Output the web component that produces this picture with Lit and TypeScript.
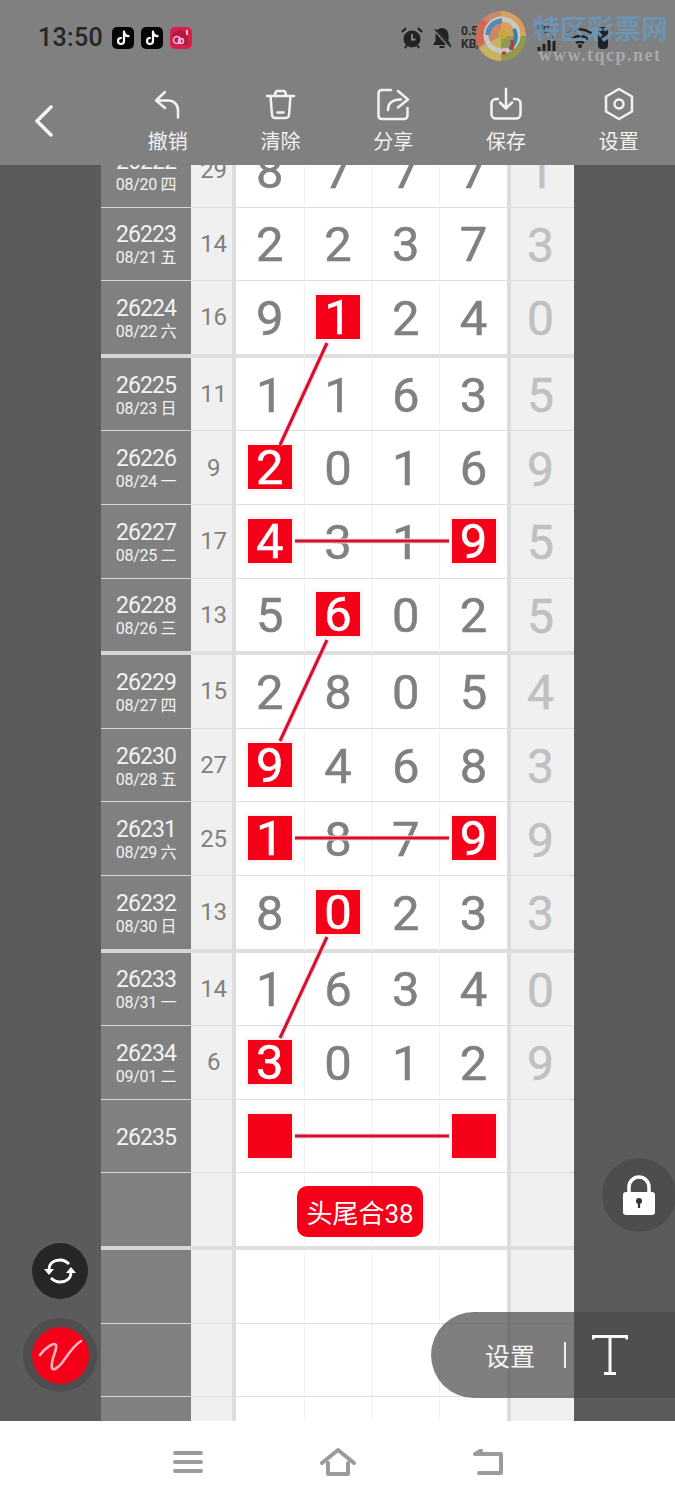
import { LitElement, html, css, svg } from 'lit';
import { customElement } from 'lit/decorators.js';

type Digit = number | string;
interface Row {
  issue?: string;
  date?: string;
  sum?: number;
  digits?: Digit[];
  hits?: number[];
  last?: number;
  end?: boolean;
  badge?: string;
}

const ROWS: Row[] = [
  { issue: '26222', date: '08/20 四', sum: 29, digits: [8, 7, 7, 7], last: 1 },
  { issue: '26223', date: '08/21 五', sum: 14, digits: [2, 2, 3, 7], last: 3 },
  { issue: '26224', date: '08/22 六', sum: 16, digits: [9, 1, 2, 4], hits: [1], last: 0, end: true },
  { issue: '26225', date: '08/23 日', sum: 11, digits: [1, 1, 6, 3], last: 5 },
  { issue: '26226', date: '08/24 一', sum: 9, digits: [2, 0, 1, 6], hits: [0], last: 9 },
  { issue: '26227', date: '08/25 二', sum: 17, digits: [4, 3, 1, 9], hits: [0, 3], last: 5 },
  { issue: '26228', date: '08/26 三', sum: 13, digits: [5, 6, 0, 2], hits: [1], last: 5, end: true },
  { issue: '26229', date: '08/27 四', sum: 15, digits: [2, 8, 0, 5], last: 4 },
  { issue: '26230', date: '08/28 五', sum: 27, digits: [9, 4, 6, 8], hits: [0], last: 3 },
  { issue: '26231', date: '08/29 六', sum: 25, digits: [1, 8, 7, 9], hits: [0, 3], last: 9 },
  { issue: '26232', date: '08/30 日', sum: 13, digits: [8, 0, 2, 3], hits: [1], last: 3, end: true },
  { issue: '26233', date: '08/31 一', sum: 14, digits: [1, 6, 3, 4], last: 0 },
  { issue: '26234', date: '09/01 二', sum: 6, digits: [3, 0, 1, 2], hits: [0], last: 9 },
  { issue: '26235', digits: ['', '', '', ''], hits: [0, 3] },
  { badge: '头尾合38', end: true },
  {},
  {},
  {},
];

// link lines between the marked cells, in page coordinates minus the 165px header
const LINKS = [
  [327, 178, 280, 280],
  [295, 376, 449, 376],
  [327, 475, 280, 576],
  [295, 673, 449, 673],
  [327, 772, 280, 873],
  [295, 971, 449, 971],
];

const TOOLS = [
  {
    label: '撤销',
    icon: svg`<path d="M14 5 5 13.5l9 7.5M5.5 13.5H17c6 0 10 4 10 10v7"/>`,
  },
  {
    label: '清除',
    icon: svg`<path d="M3 9h27M11 9c0-2 .5-4.5 2-5h7c1.500 .5 2 3 2 5M6.500 9l1.500 19c.2 2 1.500 3 3 3h11c1.500 0 2.800-1 3-3l1.500-19M13.500 25.500h6"/>`,
  },
  {
    label: '分享',
    icon: svg`<path d="M15 3H6C3.800 3 2.500 4.500 2.500 6.500v22C2.500 30.500 3.800 32 6 32h22c2 0 3.500-1.500 3.500-3.500V21"/><path d="M13 23c0-7 4-10.500 13-10.500M23 4l10 8.500-10 8" transform="translate(-1 0)"/>`,
  },
  {
    label: '保存',
    icon: svg`<path d="M9 12H7c-2.500 0-4.500 2-4.500 4.500V27c0 2.800 2 4.500 4.500 4.500h20c2.500 0 4.500-1.700 4.500-4.500V16.500C31.500 14 29.500 12 27 12h-2M17 2v19M11 15.500l6 6 6-6"/>`,
  },
  {
    label: '设置',
    icon: svg`<path d="M17 2 30 9.500v15L17 32 4 24.500v-15Z"/><circle cx="17" cy="17" r="4.500"/>`,
  },
];

@customElement('app-root')
export class AppRoot extends LitElement {
  static styles = css`
    :host {
      display: block;
      width: 675px;
      height: 1500px;
      overflow: hidden;
      font-family: Roboto, 'Noto Sans CJK SC', sans-serif;
      background: #fff;
    }

    .top {
      height: 165px;
      background: #808080;
      position: relative;
    }

    .status {
      height: 75px;
      display: flex;
      align-items: center;
      padding-left: 38px;
      box-sizing: border-box;
    }

    .time {
      font-size: 25px;
      font-weight: 500;
      color: #262626;
      width: 74px;
      letter-spacing: 0.3px;
    }

    .apps {
      display: flex;
      gap: 7px;
    }

    .app {
      width: 22px;
      height: 22px;
      display: block;
    }

    .sys {
      margin-left: auto;
      display: flex;
      align-items: center;
      padding-right: 67px;
      height: 30px;
    }

    .speed {
      font-size: 12px;
      line-height: 13px;
      font-weight: 700;
      color: #2a2a2a;
      width: 38px;
      margin: 0 0 0 7px;
    }

    .bars {
      width: 20px;
      margin-left: 38px;
      display: flex;
      flex-direction: column;
      font-size: 10px;
      line-height: 10px;
      font-weight: 700;
      color: #2a2a2a;
    }

    .bars svg {
      display: block;
      margin-top: 1px;
    }

    .wifi {
      margin-left: 10px;
    }

    .battery {
      width: 10px;
      height: 22px;
      background: #1e2226;
      border-radius: 4px;
      margin-left: 5px;
    }

    .logo {
      position: absolute;
      left: 476px;
      top: 11px;
      width: 50px;
      height: 50px;
    }

    .mark {
      position: absolute;
      left: 533px;
      top: 15px;
      width: 134px;
      text-align: center;
    }

    .mark b {
      display: block;
      font-size: 27px;
      line-height: 30px;
      font-weight: 700;
      color: #6a98b9;
      opacity: 0.9;
      white-space: nowrap;
    }

    .mark i {
      display: block;
      font: 700 18px/20px 'Liberation Serif', serif;
      color: #a9a9a9;
      letter-spacing: 1.500px;
      white-space: nowrap;
    }

    .tools {
      display: flex;
      height: 90px;
    }

    .back {
      width: 111.500px;
      display: flex;
      padding: 30px 0 0 34px;
      box-sizing: border-box;
    }

    .tool {
      flex: 1;
      display: flex;
      flex-direction: column;
      align-items: center;
      color: #f2f2f2;
      padding-top: 12px;
      box-sizing: border-box;
      font-size: 20px;
      line-height: 28px;
    }

    .tool svg,
    .back svg,
    .nav svg {
      display: block;
      fill: none;
      stroke: currentColor;
      stroke-linecap: round;
      stroke-linejoin: round;
    }

    .tool svg {
      stroke-width: 2.500;
      margin-bottom: 7px;
    }

    .back svg {
      color: #f6f6f6;
      stroke-width: 3.500;
    }

    .main {
      height: 1256px;
      background: #5b5b5b;
      overflow: hidden;
      position: relative;
    }

    .table {
      margin: -31px 0 0 101px;
      width: 473px;
    }

    .row {
      display: grid;
      grid-template-columns: 90px 45px repeat(4, 67.750px) 67px;
      height: 73.600px;
      position: relative;
    }

    .row.end {
      height: 76.600px;
    }

    .cell {
      box-sizing: border-box;
      display: flex;
      flex-direction: column;
      align-items: center;
      justify-content: center;
      border-bottom: 1px solid #dedede;
    }

    .end .cell {
      border-bottom-width: 4px;
    }

    .id {
      background: #808080;
      color: #f2f2f2;
      border-bottom-color: #d6d6d6;
      padding-top: 2px;
    }

    .id b {
      font-size: 23px;
      line-height: 27px;
      font-weight: 400;
      letter-spacing: -0.900px;
    }

    .id span {
      font-size: 16px;
      line-height: 20px;
      letter-spacing: -0.300px;
    }

    .sum {
      background: #f0f0f0;
      color: #808080;
      font-size: 24px;
      letter-spacing: -0.300px;
      border-right: 4px solid #dcdcdc;
      padding-left: 4px;
    }

    .num {
      background: #fff;
      color: #808080;
      font-size: 49px;
      -webkit-text-stroke: 0.500px currentColor;
      border-left: 1px solid #f1f1f1;
    }

    .num:nth-child(3) {
      border-left: none;
    }

    .num span {
      line-height: 44px;
      padding-top: 3px;
    }

    .num .hit {
      width: 44px;
      height: 44px;
      padding-top: 2px;
      margin-top: -1px;
      box-sizing: border-box;
      display: flex;
      align-items: center;
      justify-content: center;
      background: #f50019;
      color: #fff;
      box-shadow: 0 0 0 3px #fdf4f4;
    }

    .rest {
      background: #f0f0f0;
      color: #c0c0c0;
      font-size: 48px;
      -webkit-text-stroke: 0.500px currentColor;
      border-left: 4px solid #dcdcdc;
      padding-top: 3px;
      padding-right: 4px;
    }

    .badge {
      position: absolute;
      left: 196px;
      top: 13px;
      width: 126px;
      height: 51px;
      border-radius: 10px;
      background: #f50019;
      color: #fff;
      font-size: 26px;
      display: flex;
      align-items: center;
      justify-content: center;
    }

    .links {
      position: absolute;
      left: 0;
      top: 0;
    }

    .links .halo {
      stroke: #fbd6da;
      stroke-width: 5;
    }

    .links .ink {
      stroke: #d4102f;
      stroke-width: 3;
    }

    .round {
      position: absolute;
      border-radius: 50%;
      display: flex;
      align-items: center;
      justify-content: center;
    }

    .sync {
      left: 32px;
      top: 1078px;
      width: 56px;
      height: 56px;
      background: #262626;
    }

    .pen {
      left: 23px;
      top: 1153px;
      width: 74px;
      height: 74px;
      background: #4e4e4e;
    }

    .pen div {
      width: 57px;
      height: 57px;
      border-radius: 50%;
      background: #f50019;
      display: flex;
      align-items: center;
      justify-content: center;
    }

    .lock {
      left: 602px;
      top: 993px;
      width: 74px;
      height: 74px;
      background: #4d4d4d;
    }

    .pill {
      position: absolute;
      left: 431px;
      top: 1147px;
      width: 244px;
      height: 86px;
      border-radius: 43px 0 0 43px;
      background: rgba(75, 75, 75, 0.71);
      display: flex;
      align-items: center;
      box-sizing: border-box;
      padding-left: 54px;
      color: #f4f4f4;
      font-size: 25px;
    }

    .pill i {
      width: 2px;
      height: 26px;
      background: #eee;
      margin: 0 26px 0 29px;
    }

    .nav {
      height: 79px;
      background: #fff;
      color: #9b9b9b;
      display: flex;
      justify-content: center;
      align-items: center;
      gap: 117px;
      padding-top: 2px;
      box-sizing: border-box;
    }

    .nav svg {
      stroke-width: 4;
    }
  `;

  private renderRow(r: Row) {
    const hits = r.hits ?? [];
    const digits = r.digits ?? ['', '', '', ''];
    return html`
      <div class="row ${r.end ? 'end' : ''}">
        <div class="cell id">
          ${r.issue ? html`<b>${r.issue}</b>` : ''}
          ${r.date ? html`<span>${r.date}</span>` : ''}
        </div>
        <div class="cell sum">${r.sum ?? ''}</div>
        ${digits.map(
          (d, i) => html`
            <div class="cell num">
              <span class=${hits.includes(i) ? 'hit' : ''}>${d}</span>
            </div>
          `,
        )}
        <div class="cell rest">${r.last ?? ''}</div>
        ${r.badge ? html`<div class="badge">${r.badge}</div>` : ''}
      </div>
    `;
  }

  private renderStatus() {
    return html`
      <div class="status">
        <div class="time">13:50</div>
        <div class="apps">
          ${[0, 1].map(
            () => html`
              <svg class="app" viewBox="0 0 22 22">
                <rect width="22" height="22" rx="5" fill="#050505" />
                <path d="M12 4.500v9.500a3 3 0 1 1-3-3M12 5c.3 2.500 2 4 4.500 4.200" fill="none" stroke="#fff" stroke-width="2.200" stroke-linecap="round" />
              </svg>
            `,
          )}
          <svg class="app" viewBox="0 0 22 22">
            <rect width="22" height="22" rx="5" fill="#d81f4b" />
            <path d="M2 8c3-5 9-6 13-3l3 5v8H4Z" fill="#b5173f" />
            <circle cx="7" cy="13" r="3.500" fill="none" stroke="#fbe" stroke-width="1.500" />
            <circle cx="11" cy="14" r="2.500" fill="none" stroke="#fbe" stroke-width="1.500" />
            <path d="M17 3v5" stroke="#fff" stroke-width="1.500" />
          </svg>
        </div>
        <div class="sys">
          <svg width="24" height="24" viewBox="0 0 24 24">
            <circle cx="12" cy="13" r="8.500" fill="#222" />
            <path d="M12 8v5.500h3.500" fill="none" stroke="#888" stroke-width="1.800" />
            <path d="M2 6l4-4M22 6l-4-4M5 22l2-3M19 22l-2-3" stroke="#222" stroke-width="2.200" />
          </svg>
          <svg style="margin-left:6px" width="24" height="24" viewBox="0 0 24 24">
            <path d="M12 2c5 0 6.500 4 6.500 8v5l2.500 4H3l2.500-4v-5C5.500 6 7 2 12 2Z" fill="#222" />
            <path d="M9.500 21h5" stroke="#222" stroke-width="2" />
            <path d="M3 2l18 20" stroke="#808080" stroke-width="3" />
            <path d="M5 3l16 18" stroke="#222" stroke-width="1.500" />
          </svg>
          <div class="speed">0.51<br />KB/s</div>
          <div class="bars">
            5G
            <svg width="20" height="15" viewBox="0 0 20 15">
              <path d="M2 15v-4M7 15V8M12 15V4M17 15V0" stroke="#222" stroke-width="3" />
            </svg>
          </div>
          <svg class="wifi" width="26" height="22" viewBox="0 0 26 20">
            <path d="M1 6c7-6 17-6 24 0M5 11c5-4 11-4 16 0M9 15c3-2 5-2 8 0" fill="none" stroke="#222" stroke-width="2.500" />
            <circle cx="13" cy="18" r="2" fill="#222" />
          </svg>
          <div class="battery"></div>
        </div>
        <svg class="logo" viewBox="0 0 50 50">
          <circle cx="25" cy="25" r="25" fill="#c9886a" />
          <path d="M25 0a25 25 0 0 1 25 25H25Z" fill="#d6a15e" />
          <path d="M50 25a25 25 0 0 1-25 25V25Z" fill="#8f9a4f" />
          <path d="M25 50A25 25 0 0 1 3 37l22-12Z" fill="#c7b25d" />
          <path d="M6 8a25 25 0 0 0-4 28l10-6c-3-7-2-13 2-17Z" fill="#d16a55" />
          <circle cx="26" cy="24" r="16" fill="none" stroke="#c8c8c8" stroke-width="5" />
          <path d="M12 24c0-8 6-14 14-14" fill="none" stroke="#4f8bb5" stroke-width="5" />
          <path d="M38 18c4 8 1 16-5 20" fill="none" stroke="#3c7fa6" stroke-width="4" />
          <path d="M30 42h-4M36 29v10" stroke="#c4362f" stroke-width="3" />
          <circle cx="27" cy="23" r="5" fill="#c6a93e" />
        </svg>
        <div class="mark"><b>特区彩票网</b><i>www.tqcp.net</i></div>
      </div>
    `;
  }

  render() {
    return html`
      <div class="top">
        ${this.renderStatus()}
        <div class="tools">
          <div class="back">
            <svg width="20" height="32" viewBox="0 0 20 32"><path d="M17 2 3 16l14 14" /></svg>
          </div>
          ${TOOLS.map(
            (t) => html`
              <div class="tool">
                <svg width="34" height="34" viewBox="0 0 34 34">${t.icon}</svg>
                <span>${t.label}</span>
              </div>
            `,
          )}
        </div>
      </div>

      <div class="main">
        <div class="table">${ROWS.map((r) => this.renderRow(r))}</div>

        <svg class="links" width="675" height="1256">
          ${LINKS.map(
            ([x1, y1, x2, y2]) => svg`
              <line class="halo" x1=${x1} y1=${y1} x2=${x2} y2=${y2} />
              <line class="ink" x1=${x1} y1=${y1} x2=${x2} y2=${y2} />
            `,
          )}
        </svg>

        <div class="round sync">
          <svg width="32" height="30" viewBox="0 0 32 30" fill="none" stroke="#fff" stroke-width="2.800">
            <path d="M5 14C5 7 10 4 16 4c4 0 7 2 9 4" />
            <path d="M27 16c0 7-5 10-11 10-4 0-7-2-9-4" />
            <path d="M0 13h10l-5 6Z" fill="#fff" stroke="none" />
            <path d="M22 17h10l-5-6Z" fill="#fff" stroke="none" />
          </svg>
        </div>
        <div class="round pen">
          <div>
            <svg width="46" height="38" viewBox="0 0 46 38" fill="none" stroke="#f8b6c0" stroke-width="2.600" stroke-linecap="round">
              <path d="M3 19C9 11 17 6 19 9c2 4-6 15-4 23 1 3 6 0 10-5C30 20 36 10 44 5" />
            </svg>
          </div>
        </div>
        <div class="round lock">
          <svg width="36" height="42" viewBox="0 0 36 42">
            <path d="M8 19v-6a10 10 0 0 1 20 0v6" fill="none" stroke="#fff" stroke-width="3.500" />
            <rect x="2" y="18" width="32" height="23" rx="3" fill="#fff" />
            <circle cx="18" cy="27" r="3" fill="#333" />
            <path d="M18 28v6" stroke="#333" stroke-width="2.200" />
          </svg>
        </div>
        <div class="pill">
          设置<i></i>
          <svg width="36" height="40" viewBox="0 0 36 40" fill="none" stroke="#f8f8f8" stroke-width="3">
            <path d="M1 4.500V1.500h34v3M18 2v36M12 38.500h12" />
          </svg>
        </div>
      </div>

      <div class="nav">
        <svg width="30" height="26" viewBox="0 0 30 26"><path d="M2 4h26M2 13h26M2 22h26" /></svg>
        <svg width="36" height="28" viewBox="0 0 36 28"><path d="M2 15 18 2l16 13M8 15v11h20V15" /></svg>
        <svg width="30" height="26" viewBox="0 0 30 26"><path d="M2 5h26v19H6M2 5l6-3.500" /></svg>
      </div>
    `;
  }
}
